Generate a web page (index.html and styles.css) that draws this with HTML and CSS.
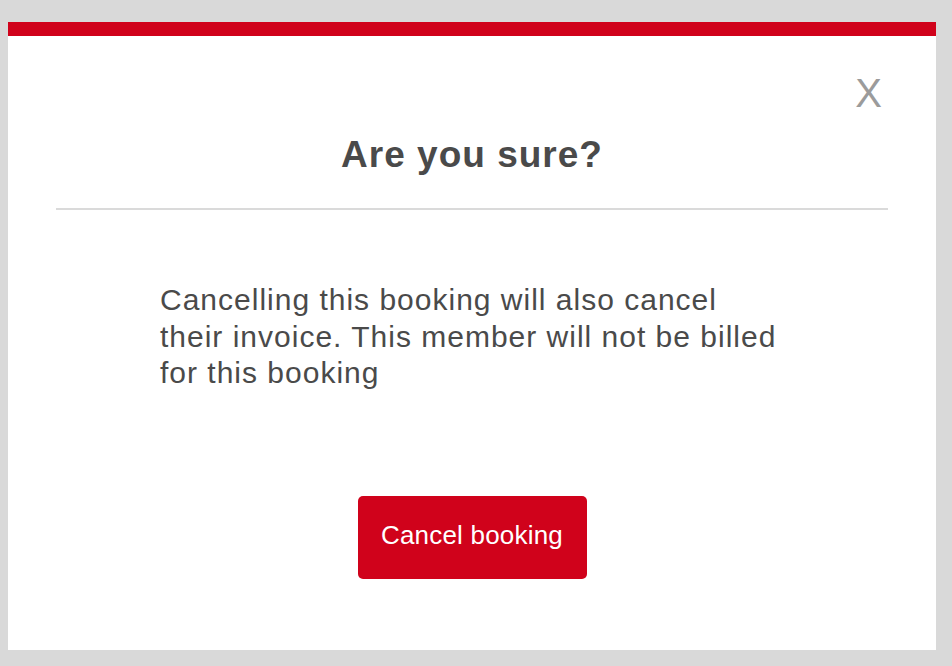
FILE: index.html
```html
<!DOCTYPE html>
<html lang="en">
<head>
<meta charset="utf-8">
<title>Are you sure?</title>
<link rel="stylesheet" href="styles.css">
</head>
<body>
<div class="modal">
  <button class="close" type="button" aria-label="Close">X</button>
  <h1 class="title">Are you sure?</h1>
  <hr class="divider">
  <p class="message">Cancelling this booking will also cancel their invoice. This member will not be billed for this booking</p>
  <div class="actions">
    <button class="btn-danger" type="button">Cancel booking</button>
  </div>
</div>
</body>
</html>
```

FILE: styles.css
```css
html, body {
  margin: 0;
  padding: 0;
}
body {
  background: #d9d9d9;
  width: 952px;
  height: 666px;
  padding: 22px 16px 16px 8px;
  box-sizing: border-box;
  font-family: "Liberation Sans", Arial, sans-serif;
  color: #4a4a4a;
}
.modal {
  position: relative;
  width: 928px;
  height: 628px;
  box-sizing: border-box;
  background: #fff;
  border-top: 14px solid #d0021b;
  display: flex;
  flex-direction: column;
}
.close {
  position: absolute;
  top: 37px;
  right: 54px;
  padding: 0;
  margin: 0;
  border: 0;
  background: none;
  font-family: "Liberation Sans", Arial, sans-serif;
  font-size: 40px;
  line-height: 40px;
  color: #9b9b9b;
  cursor: pointer;
}
.title {
  margin: 97px 0 0;
  text-align: center;
  font-size: 37px;
  line-height: 43px;
  font-weight: 700;
  letter-spacing: 1px;
  color: #4a4a4a;
}
.divider {
  margin: 32px 48px 0;
  border: 0;
  height: 2px;
  background: #dadada;
}
.message {
  margin: 72px 150px 0 152px;
  font-size: 30px;
  line-height: 36.5px;
  letter-spacing: 1px;
  color: #4a4a4a;
}
.actions {
  display: flex;
  justify-content: center;
  margin-top: 104px;
}
.btn-danger {
  width: 229px;
  height: 83px;
  border: 0;
  border-radius: 5px;
  background: #d0021b;
  color: #fff;
  font-family: "Liberation Sans", Arial, sans-serif;
  font-size: 26px;
  line-height: 30px;
  letter-spacing: 0.2px;
  padding: 0 0 4px;
}
```
